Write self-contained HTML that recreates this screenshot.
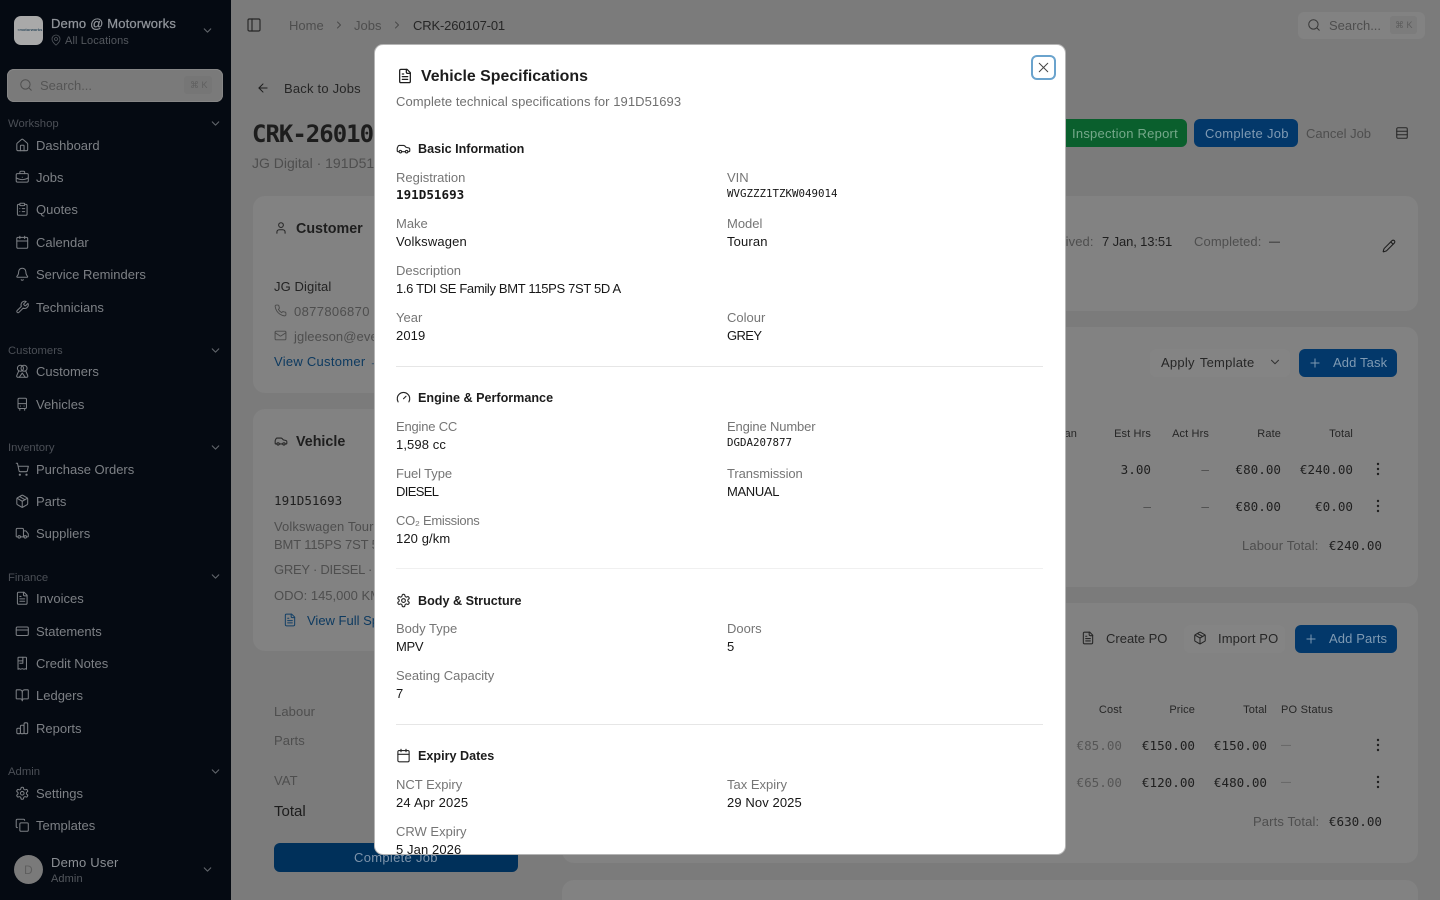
<!DOCTYPE html>
<html lang="en"><head><meta charset="utf-8"><title>Vehicle Specifications</title>
<style>
html,body{margin:0;padding:0;width:1440px;height:900px;overflow:hidden;background:#7b7b7b}
body{position:relative;font-family:"Liberation Sans","DejaVu Sans",sans-serif;font-size:13px;color:#1c1c1c}
.t{position:absolute;line-height:20px;height:20px;white-space:nowrap;margin-top:1px}
.m{font-family:"DejaVu Sans Mono","Liberation Mono",monospace}
.b{position:absolute;box-sizing:border-box}
svg.i{position:absolute;fill:none;stroke:currentColor;stroke-width:2;stroke-linecap:round;stroke-linejoin:round}
#side{position:absolute;left:0;top:0;width:231px;height:900px;background:#050a12;overflow:hidden}
#side .n{position:absolute;left:36px;line-height:20px;color:#7d8085;white-space:nowrap;margin-top:1px}
#side .g{position:absolute;left:8px;line-height:16px;font-size:11.3px;color:#4b4f56;white-space:nowrap;margin-top:1px}
#side svg.i{color:#7d8085;width:14.5px;height:14.5px;left:15px;stroke-width:1.7}
#side svg.c{color:#62666c;width:13px;height:13px;left:209px;stroke-width:2}
.card{position:absolute;background:#828282;border-radius:12px}
.g5{color:#4e4e4e}
.h11{font-size:11px;color:#262626;letter-spacing:.12px}
.btn{position:absolute;border-radius:6px;box-sizing:border-box}
.val{font-size:12.6px;color:#1f1f1f}
#modal{position:absolute;left:375px;top:45px;width:690px;height:809px;background:#fff;border-radius:8px;overflow:hidden;box-shadow:0 0 0 1px #b5b5b5;z-index:5}
#modal .l{position:absolute;line-height:20px;color:#757575;white-space:nowrap;margin-top:1px}
#modal .v{position:absolute;line-height:20px;color:#171717;white-space:nowrap;margin-top:1px;letter-spacing:.1px}
#modal .h{position:absolute;left:43px;line-height:20px;font-size:12.6px;font-weight:bold;color:#1c1c1c;white-space:nowrap;margin-top:1px}
#modal .r{position:absolute;left:21px;width:647px;height:1px;background:#e6e6e6}
#modal svg.i{width:15px;height:15px;left:21px;color:#262626;stroke-width:1.8}
</style></head><body>
<svg width="0" height="0" style="position:absolute">
<defs>
<symbol id="house" viewBox="0 0 24 24"><path d="M15 21v-8a1 1 0 0 0-1-1h-4a1 1 0 0 0-1 1v8"/><path d="M3 10a2 2 0 0 1 .709-1.528l7-5.999a2 2 0 0 1 2.582 0l7 5.999A2 2 0 0 1 21 10v9a2 2 0 0 1-2 2H5a2 2 0 0 1-2-2z"/></symbol>
<symbol id="brief" viewBox="0 0 24 24"><path d="M12 12h.01"/><path d="M16 6V4a2 2 0 0 0-2-2h-4a2 2 0 0 0-2 2v2"/><path d="M22 13a18.15 18.15 0 0 1-20 0"/><rect x="2" y="6" width="20" height="14" rx="2"/></symbol>
<symbol id="clip" viewBox="0 0 24 24"><rect x="8" y="2" width="8" height="4" rx="1"/><path d="M16 4h2a2 2 0 0 1 2 2v14a2 2 0 0 1-2 2H6a2 2 0 0 1-2-2V6a2 2 0 0 1 2-2h2"/><path d="M12 11h4"/><path d="M12 16h4"/><path d="M8 11h.01"/><path d="M8 16h.01"/></symbol>
<symbol id="cal" viewBox="0 0 24 24"><path d="M8 2v4"/><path d="M16 2v4"/><rect x="3" y="4" width="18" height="18" rx="2"/><path d="M3 10h18"/></symbol>
<symbol id="bell" viewBox="0 0 24 24"><path d="M10.268 21a2 2 0 0 0 3.464 0"/><path d="M3.262 15.326A1 1 0 0 0 4 17h16a1 1 0 0 0 .74-1.673C19.41 13.956 18 12.499 18 8A6 6 0 0 0 6 8c0 4.499-1.411 5.956-2.738 7.326"/></symbol>
<symbol id="wrench" viewBox="0 0 24 24"><path d="M14.7 6.3a1 1 0 0 0 0 1.4l1.6 1.6a1 1 0 0 0 1.4 0l3.77-3.77a6 6 0 0 1-7.94 7.94l-6.91 6.91a2.12 2.12 0 0 1-3-3l6.91-6.91a6 6 0 0 1 7.94-7.94l-3.76 3.76z"/></symbol>
<symbol id="people" viewBox="0 0 24 24"><circle cx="9" cy="7" r="5"/><circle cx="15" cy="7" r="5"/><path d="M6 12 3 19a2 2 0 0 0 2 3h14a2 2 0 0 0 2-3l-3-7"/><path d="M12 15l-5 7M12 15l5 7"/></symbol>
<symbol id="bus" viewBox="0 0 24 24"><rect x="5" y="2" width="14" height="17" rx="2"/><path d="M5 11h14"/><path d="M9 15h.01"/><path d="M15 15h.01"/><path d="M8 19v3"/><path d="M16 19v3"/></symbol>
<symbol id="cart" viewBox="0 0 24 24"><circle cx="8" cy="21" r="1"/><circle cx="19" cy="21" r="1"/><path d="M2.05 2.05h2l2.66 12.42a2 2 0 0 0 2 1.58h9.78a2 2 0 0 0 1.95-1.57l1.65-7.43H5.12"/></symbol>
<symbol id="pkg" viewBox="0 0 24 24"><path d="M11 21.73a2 2 0 0 0 2 0l7-4A2 2 0 0 0 21 16V8a2 2 0 0 0-1-1.73l-7-4a2 2 0 0 0-2 0l-7 4A2 2 0 0 0 3 8v8a2 2 0 0 0 1 1.73z"/><path d="M12 22V12"/><polyline points="3.29 7 12 12 20.71 7"/><path d="m7.5 4.27 9 5.15"/></symbol>
<symbol id="truck" viewBox="0 0 24 24"><path d="M14 18V6a2 2 0 0 0-2-2H4a2 2 0 0 0-2 2v11a1 1 0 0 0 1 1h2"/><path d="M15 18H9"/><path d="M19 18h2a1 1 0 0 0 1-1v-3.65a1 1 0 0 0-.22-.624l-3.48-4.35A1 1 0 0 0 17.52 8H14"/><circle cx="17" cy="18" r="2"/><circle cx="7" cy="18" r="2"/></symbol>
<symbol id="file" viewBox="0 0 24 24"><path d="M15 2H6a2 2 0 0 0-2 2v16a2 2 0 0 0 2 2h12a2 2 0 0 0 2-2V7Z"/><path d="M14 2v4a2 2 0 0 0 2 2h4"/><path d="M10 9H8"/><path d="M16 13H8"/><path d="M16 17H8"/></symbol>
<symbol id="card" viewBox="0 0 24 24"><rect x="2" y="5" width="20" height="14" rx="2"/><path d="M2 10h20"/></symbol>
<symbol id="note" viewBox="0 0 24 24"><path d="M6 2h12a1 1 0 0 1 1 1v19l-2-1-2 1-3-1-3 1-2-1-2 1V3a1 1 0 0 1 1-1z"/><path d="M5 8h8"/><path d="M13 2v10H8"/></symbol>
<symbol id="book" viewBox="0 0 24 24"><path d="M12 7v14"/><path d="M3 18a1 1 0 0 1-1-1V4a1 1 0 0 1 1-1h5a4 4 0 0 1 4 4 4 4 0 0 1 4-4h5a1 1 0 0 1 1 1v13a1 1 0 0 1-1 1h-6a3 3 0 0 0-3 3 3 3 0 0 0-3-3z"/></symbol>
<symbol id="bars" viewBox="0 0 24 24"><rect x="3" y="12" width="6" height="9" rx="2"/><rect x="9" y="7" width="6" height="14" rx="2"/><rect x="15" y="3" width="6" height="18" rx="2"/></symbol>
<symbol id="gear" viewBox="0 0 24 24"><path d="M12.22 2h-.44a2 2 0 0 0-2 2v.18a2 2 0 0 1-1 1.73l-.43.25a2 2 0 0 1-2 0l-.15-.08a2 2 0 0 0-2.73.73l-.22.38a2 2 0 0 0 .73 2.73l.15.1a2 2 0 0 1 1 1.72v.51a2 2 0 0 1-1 1.74l-.15.09a2 2 0 0 0-.73 2.73l.22.38a2 2 0 0 0 2.73.73l.15-.08a2 2 0 0 1 2 0l.43.25a2 2 0 0 1 1 1.73V20a2 2 0 0 0 2 2h.44a2 2 0 0 0 2-2v-.18a2 2 0 0 1 1-1.73l.43-.25a2 2 0 0 1 2 0l.15.08a2 2 0 0 0 2.73-.73l.22-.39a2 2 0 0 0-.73-2.73l-.15-.08a2 2 0 0 1-1-1.74v-.5a2 2 0 0 1 1-1.74l.15-.09a2 2 0 0 0 .73-2.73l-.22-.38a2 2 0 0 0-2.73-.73l-.15.08a2 2 0 0 1-2 0l-.43-.25a2 2 0 0 1-1-1.73V4a2 2 0 0 0-2-2z"/><circle cx="12" cy="12" r="3"/></symbol>
<symbol id="copy" viewBox="0 0 24 24"><rect x="8" y="8" width="14" height="14" rx="2"/><path d="M4 16c-1.1 0-2-.9-2-2V4c0-1.1.9-2 2-2h10c1.1 0 2 .9 2 2"/></symbol>
<symbol id="car" viewBox="0 0 24 24"><path d="M19 17h2c.6 0 1-.4 1-1v-3c0-.9-.7-1.7-1.5-1.9C18.7 10.6 16 10 16 10s-1.3-1.4-2.2-2.3c-.5-.4-1.1-.7-1.8-.7H5c-.6 0-1.1.4-1.4.9l-1.4 2.9A3.7 3.7 0 0 0 2 12v4c0 .6.4 1 1 1h2"/><circle cx="7" cy="17" r="2"/><path d="M9 17h6"/><circle cx="17" cy="17" r="2"/></symbol>
<symbol id="gauge" viewBox="0 0 24 24"><path d="m12 14 4-4"/><path d="M3.34 19a10 10 0 1 1 17.32 0"/></symbol>
<symbol id="pin" viewBox="0 0 24 24"><path d="M20 10c0 4.993-5.539 10.193-7.399 11.799a1 1 0 0 1-1.202 0C9.539 20.193 4 14.993 4 10a8 8 0 0 1 16 0"/><circle cx="12" cy="10" r="3"/></symbol>
<symbol id="panel" viewBox="0 0 24 24"><rect x="3" y="3" width="18" height="18" rx="2"/><path d="M9 3v18"/></symbol>
<symbol id="search" viewBox="0 0 24 24"><path d="m21 21-4.34-4.34"/><circle cx="11" cy="11" r="8"/></symbol>
<symbol id="x" viewBox="0 0 24 24"><path d="M18 6 6 18"/><path d="m6 6 12 12"/></symbol>
<symbol id="pencil" viewBox="0 0 24 24"><path d="M21.174 6.812a1 1 0 0 0-3.986-3.987L3.842 16.174a2 2 0 0 0-.5.83l-1.321 4.352a.5.5 0 0 0 .623.622l4.353-1.32a2 2 0 0 0 .83-.497z"/><path d="m15 5 4 4"/></symbol>
<symbol id="user" viewBox="0 0 24 24"><path d="M19 21v-2a4 4 0 0 0-4-4H9a4 4 0 0 0-4 4v2"/><circle cx="12" cy="7" r="4"/></symbol>
<symbol id="phone" viewBox="0 0 24 24"><path d="M22 16.92v3a2 2 0 0 1-2.18 2 19.79 19.79 0 0 1-8.63-3.07 19.5 19.5 0 0 1-6-6 19.79 19.79 0 0 1-3.07-8.67A2 2 0 0 1 4.11 2h3a2 2 0 0 1 2 1.72 12.84 12.84 0 0 0 .7 2.81 2 2 0 0 1-.45 2.11L8.09 9.91a16 16 0 0 0 6 6l1.27-1.27a2 2 0 0 1 2.11-.45 12.84 12.84 0 0 0 2.81.7A2 2 0 0 1 22 16.92z"/></symbol>
<symbol id="mail" viewBox="0 0 24 24"><rect x="2" y="4" width="20" height="16" rx="2"/><path d="m22 7-8.97 5.7a1.94 1.94 0 0 1-2.06 0L2 7"/></symbol>
<symbol id="down" viewBox="0 0 24 24"><path d="m6 9 6 6 6-6"/></symbol>
<symbol id="right" viewBox="0 0 24 24"><path d="m9 18 6-6-6-6"/></symbol>
<symbol id="left" viewBox="0 0 24 24"><path d="m12 19-7-7 7-7"/><path d="M19 12H5"/></symbol>
<symbol id="plus" viewBox="0 0 24 24"><path d="M5 12h14"/><path d="M12 5v14"/></symbol>
<symbol id="table" viewBox="0 0 24 24"><rect x="3" y="3" width="18" height="18" rx="2"/><path d="M3 9h18"/><path d="M3 15h18"/></symbol>
</defs></svg>

<!-- HEADER -->
<svg class="i" style="left:246px;top:17px;width:16px;height:16px;color:#262626;stroke-width:1.7"><use href="#panel"/></svg>
<div class="t g5" style="left:289px;top:15px">Home</div>
<svg class="i" style="left:333px;top:19px;width:12px;height:12px;color:#4a4a4a"><use href="#right"/></svg>
<div class="t g5" style="left:354px;top:15px">Jobs</div>
<svg class="i" style="left:391px;top:19px;width:12px;height:12px;color:#4a4a4a"><use href="#right"/></svg>
<div class="t" style="left:413px;top:15px;color:#262626;letter-spacing:-.15px">CRK-260107-01</div>
<div class="b" style="left:1298px;top:12px;width:127px;height:27px;border-radius:6px;background:#828282"></div>
<svg class="i" style="left:1307px;top:18px;width:14px;height:14px;color:#363636;stroke-width:1.7"><use href="#search"/></svg>
<div class="t g5" style="left:1329px;top:15px">Search...</div>
<div class="b" style="left:1390px;top:16px;width:27px;height:18px;border-radius:3px;background:#7c7c7c"></div>
<div class="t" style="left:1395px;top:14px;font-size:9px;color:#5c5c5c">⌘ K</div>

<!-- LEFT COLUMN -->
<svg class="i" style="left:256px;top:81px;width:14px;height:14px;color:#1c1c1c;stroke-width:1.7"><use href="#left"/></svg>
<div class="t" style="left:284px;top:78px;color:#262626;letter-spacing:.2px">Back to Jobs</div>
<div class="t m" style="left:252px;top:123px;font-size:24px;font-weight:bold;letter-spacing:-1px;color:#1d1d1d">CRK-260107-01</div>
<div class="t g5" style="left:252px;top:152px;font-size:14px">JG Digital · 191D51693</div>

<div class="card" style="left:253px;top:196px;width:290px;height:197px"></div>
<svg class="i" style="left:274px;top:221px;width:14px;height:14px;color:#262626;stroke-width:1.8"><use href="#user"/></svg>
<div class="t" style="left:296px;top:218px;font-size:14.3px;font-weight:bold;color:#1e1e1e">Customer</div>
<div class="t" style="left:274px;top:276px;color:#232323;letter-spacing:.1px">JG Digital</div>
<svg class="i" style="left:274px;top:304px;width:13px;height:13px;color:#4a4a4a;stroke-width:1.7"><use href="#phone"/></svg>
<div class="t g5" style="left:294px;top:301px;letter-spacing:.35px">0877806870</div>
<svg class="i" style="left:274px;top:329px;width:13px;height:13px;color:#4a4a4a;stroke-width:1.7"><use href="#mail"/></svg>
<div class="t g5" style="left:294px;top:326px;letter-spacing:.1px">jgleeson@everydigital.ie</div>
<div class="t" style="left:274px;top:351px;color:#0d3a60;letter-spacing:.27px">View Customer →</div>

<div class="card" style="left:253px;top:409px;width:290px;height:242px"></div>
<svg class="i" style="left:274px;top:434px;width:14px;height:14px;color:#262626;stroke-width:1.8"><use href="#car"/></svg>
<div class="t" style="left:296px;top:431px;font-size:14.3px;font-weight:bold;color:#1e1e1e">Vehicle</div>
<div class="t m" style="left:274px;top:490px;font-size:12.6px;color:#1f1f1f">191D51693</div>
<div class="t g5" style="left:274px;top:516px;letter-spacing:.1px">Volkswagen Touran 1.6 TDI SE Family</div>
<div class="t g5" style="left:274px;top:534px;letter-spacing:-.15px">BMT 115PS 7ST 5D A</div>
<div class="t g5" style="left:274px;top:559px;letter-spacing:-.25px">GREY · DIESEL · MANUAL</div>
<div class="t g5" style="left:274px;top:585px">ODO: 145,000 KM</div>
<svg class="i" style="left:283px;top:613px;width:14px;height:14px;color:#123f66;stroke-width:1.7"><use href="#file"/></svg>
<div class="t" style="left:307px;top:610px;color:#0d3a60">View Full Specifications</div>

<div class="t g5" style="left:274px;top:701px;letter-spacing:.1px">Labour</div>
<div class="t g5" style="left:274px;top:730px;letter-spacing:.1px">Parts</div>
<div class="t g5" style="left:274px;top:770px;letter-spacing:.1px">VAT</div>
<div class="t" style="left:274px;top:801px;font-size:15px;color:#1c1c1c">Total</div>
<div class="b" style="left:274px;top:843px;width:244px;height:29px;border-radius:6px;background:#00305a"></div>
<div class="t" style="left:354px;top:847px;color:#7d93aa;letter-spacing:.3px">Complete Job</div>

<!-- RIGHT COLUMN -->
<div class="btn" style="left:1040px;top:119px;width:147px;height:28px;background:#0a5f2d"></div>
<div class="t" style="left:1072px;top:123px;color:#75a88a;letter-spacing:.24px">Inspection Report</div>
<div class="btn" style="left:1194px;top:119px;width:104px;height:28px;background:#03386a"></div>
<div class="t" style="left:1205px;top:123px;color:#7f9ab3;letter-spacing:.3px">Complete Job</div>
<div class="t g5" style="left:1306px;top:123px">Cancel Job</div>
<svg class="i" style="left:1395px;top:126px;width:14px;height:14px;color:#262626;stroke-width:1.8"><use href="#table"/></svg>

<div class="card" style="left:562px;top:196px;width:856px;height:115px"></div>
<div class="t g5" style="left:1048px;top:231px;letter-spacing:.1px">Arrived:</div>
<div class="t" style="left:1102px;top:231px;color:#1f1f1f;letter-spacing:-.12px">7 Jan, 13:51</div>
<div class="t g5" style="left:1194px;top:231px;letter-spacing:.1px">Completed:</div>
<div class="t" style="left:1269px;top:231px;color:#1f1f1f;font-size:11px">—</div>
<svg class="i" style="left:1382px;top:239px;width:14px;height:14px;color:#1c1c1c;stroke-width:1.8"><use href="#pencil"/></svg>

<div class="card" style="left:562px;top:327px;width:856px;height:260px"></div>
<div class="b" style="left:1150px;top:349px;width:140px;height:28px;border-radius:6px;background:#848484"></div>
<div class="t" style="left:1161px;top:352px;color:#262626;letter-spacing:.24px;word-spacing:1.5px">Apply Template</div>
<svg class="i" style="left:1268px;top:355px;width:14px;height:14px;color:#303030;stroke-width:1.8"><use href="#down"/></svg>
<div class="btn" style="left:1299px;top:349px;width:98px;height:28px;background:#03386a"></div>
<svg class="i" style="left:1308px;top:356px;width:14px;height:14px;color:#7f9ab3;stroke-width:1.7"><use href="#plus"/></svg>
<div class="t" style="left:1333px;top:352px;color:#7f9ab3;letter-spacing:.12px">Add Task</div>

<div class="t h11" style="left:1065px;top:423px;width:12px;overflow:hidden;direction:rtl">an</div>
<div class="t h11" style="right:289px;top:423px">Est Hrs</div>
<div class="t h11" style="right:231px;top:423px">Act Hrs</div>
<div class="t h11" style="right:159px;top:423px">Rate</div>
<div class="t h11" style="right:87px;top:423px">Total</div>
<div class="t m val" style="right:289px;top:459px">3.00</div>
<div class="t m val" style="right:231px;top:459px;color:#4a4a4a">—</div>
<div class="t m val" style="right:159px;top:459px">€80.00</div>
<div class="t m val" style="right:87px;top:459px">€240.00</div>
<div class="t m val" style="right:289px;top:496px;color:#4a4a4a">—</div>
<div class="t m val" style="right:231px;top:496px;color:#4a4a4a">—</div>
<div class="t m val" style="right:159px;top:496px">€80.00</div>
<div class="t m val" style="right:87px;top:496px">€0.00</div>
<svg style="position:absolute;left:1376px;top:462px" width="4" height="52" fill="#1f1f1f"><circle cx="2" cy="2" r="1.2"/><circle cx="2" cy="7" r="1.2"/><circle cx="2" cy="12" r="1.2"/><circle cx="2" cy="39" r="1.2"/><circle cx="2" cy="44" r="1.2"/><circle cx="2" cy="49" r="1.2"/></svg>
<div class="t g5" style="left:1242px;top:535px;letter-spacing:.12px">Labour Total:</div>
<div class="t m val" style="right:58px;top:535px">€240.00</div>

<div class="card" style="left:562px;top:603px;width:856px;height:260px"></div>
<svg class="i" style="left:1081px;top:631px;width:14px;height:14px;color:#262626;stroke-width:1.8"><use href="#file"/></svg>
<div class="t" style="left:1106px;top:628px;color:#262626">Create PO</div>
<div class="b" style="left:1184px;top:625px;width:101px;height:28px;border-radius:6px;background:#848484"></div>
<svg class="i" style="left:1193px;top:631px;width:14px;height:14px;color:#262626;stroke-width:1.8"><use href="#pkg"/></svg>
<div class="t" style="left:1218px;top:628px;color:#262626;letter-spacing:.12px">Import PO</div>
<div class="btn" style="left:1295px;top:625px;width:102px;height:28px;background:#03386a"></div>
<svg class="i" style="left:1304px;top:632px;width:14px;height:14px;color:#7f9ab3;stroke-width:1.7"><use href="#plus"/></svg>
<div class="t" style="left:1329px;top:628px;color:#7f9ab3;letter-spacing:.12px">Add Parts</div>

<div class="t h11" style="right:318px;top:699px">Cost</div>
<div class="t h11" style="right:245px;top:699px">Price</div>
<div class="t h11" style="right:173px;top:699px">Total</div>
<div class="t h11" style="left:1281px;top:699px;letter-spacing:.22px">PO Status</div>
<div class="t m val" style="right:318px;top:735px;color:#565656">€85.00</div>
<div class="t m val" style="right:245px;top:735px">€150.00</div>
<div class="t m val" style="right:173px;top:735px">€150.00</div>
<div class="t" style="left:1281px;top:735px;color:#5c5c5c;font-size:10px">—</div>
<div class="t m val" style="right:318px;top:772px;color:#565656">€65.00</div>
<div class="t m val" style="right:245px;top:772px">€120.00</div>
<div class="t m val" style="right:173px;top:772px">€480.00</div>
<div class="t" style="left:1281px;top:772px;color:#5c5c5c;font-size:10px">—</div>
<svg style="position:absolute;left:1376px;top:738px" width="4" height="52" fill="#1f1f1f"><circle cx="2" cy="2" r="1.2"/><circle cx="2" cy="7" r="1.2"/><circle cx="2" cy="12" r="1.2"/><circle cx="2" cy="39" r="1.2"/><circle cx="2" cy="44" r="1.2"/><circle cx="2" cy="49" r="1.2"/></svg>
<div class="t g5" style="left:1253px;top:811px;letter-spacing:.12px">Parts Total:</div>
<div class="t m val" style="right:58px;top:811px">€630.00</div>

<div class="card" style="left:562px;top:880px;width:856px;height:60px"></div>

<!-- SIDEBAR -->
<div id="side">
  <div class="b" style="left:14px;top:16px;width:29px;height:29px;border-radius:7px;background:#a9a9a9"></div>
  <div class="t" style="left:17px;top:19px;font-size:4px;font-weight:bold;color:#2f4a5c;letter-spacing:0">◖motorworks</div>
  <div class="t" style="left:51px;top:13px;color:#90949a;-webkit-text-stroke:.25px #90949a;letter-spacing:.16px">Demo @ Motorworks</div>
  <svg class="i" style="left:50px;top:34px;width:12px;height:12px;color:#4e5359;stroke-width:1.7"><use href="#pin"/></svg>
  <div class="t" style="left:65px;top:30px;font-size:11px;color:#54585e;letter-spacing:.12px">All Locations</div>
  <svg class="i c" style="left:201px;top:24px"><use href="#down"/></svg>

  <div class="b" style="left:7px;top:69px;width:216px;height:33px;border-radius:7px;background:#7a7a7a;box-shadow:inset 0 0 0 1px #868686"></div>
  <svg class="i" style="left:19px;top:78px;width:14px;height:14px;color:#4e4e4e"><use href="#search"/></svg>
  <div class="t" style="left:40px;top:75px;color:#555">Search...</div>
  <div class="b" style="left:184px;top:76px;width:28px;height:18px;border-radius:3px;background:#767676"></div>
  <div class="t" style="left:190px;top:74px;font-size:9px;color:#5f5f5f">⌘ K</div>

  <div class="g" style="top:115px">Workshop</div><svg class="i c" style="top:117px"><use href="#down"/></svg>
  <svg class="i" style="top:138px"><use href="#house"/></svg><div class="n" style="top:135px">Dashboard</div>
  <svg class="i" style="top:170px"><use href="#brief"/></svg><div class="n" style="top:167px">Jobs</div>
  <svg class="i" style="top:202px"><use href="#clip"/></svg><div class="n" style="top:199px">Quotes</div>
  <svg class="i" style="top:235px"><use href="#cal"/></svg><div class="n" style="top:232px">Calendar</div>
  <svg class="i" style="top:267px"><use href="#bell"/></svg><div class="n" style="top:264px">Service Reminders</div>
  <svg class="i" style="top:300px"><use href="#wrench"/></svg><div class="n" style="top:297px">Technicians</div>

  <div class="g" style="top:342px">Customers</div><svg class="i c" style="top:344px"><use href="#down"/></svg>
  <svg class="i" style="top:364px"><use href="#people"/></svg><div class="n" style="top:361px">Customers</div>
  <svg class="i" style="top:397px"><use href="#bus"/></svg><div class="n" style="top:394px">Vehicles</div>

  <div class="g" style="top:439px">Inventory</div><svg class="i c" style="top:441px"><use href="#down"/></svg>
  <svg class="i" style="top:462px"><use href="#cart"/></svg><div class="n" style="top:459px">Purchase Orders</div>
  <svg class="i" style="top:494px"><use href="#pkg"/></svg><div class="n" style="top:491px">Parts</div>
  <svg class="i" style="top:526px"><use href="#truck"/></svg><div class="n" style="top:523px">Suppliers</div>

  <div class="g" style="top:569px">Finance</div><svg class="i c" style="top:570px"><use href="#down"/></svg>
  <svg class="i" style="top:591px"><use href="#file"/></svg><div class="n" style="top:588px">Invoices</div>
  <svg class="i" style="top:624px"><use href="#card"/></svg><div class="n" style="top:621px">Statements</div>
  <svg class="i" style="top:656px"><use href="#note"/></svg><div class="n" style="top:653px">Credit Notes</div>
  <svg class="i" style="top:688px"><use href="#book"/></svg><div class="n" style="top:685px">Ledgers</div>
  <svg class="i" style="top:721px"><use href="#bars"/></svg><div class="n" style="top:718px">Reports</div>

  <div class="g" style="top:763px">Admin</div><svg class="i c" style="top:765px"><use href="#down"/></svg>
  <svg class="i" style="top:786px"><use href="#gear"/></svg><div class="n" style="top:783px">Settings</div>
  <svg class="i" style="top:818px"><use href="#copy"/></svg><div class="n" style="top:815px">Templates</div>

  <div class="b" style="left:14px;top:855px;width:29px;height:29px;border-radius:50%;background:#7a7a7a"></div>
  <div class="t" style="left:24px;top:859px;font-size:12px;color:#5e5e5e">D</div>
  <div class="t" style="left:51px;top:852px;color:#8b8f94;letter-spacing:.2px">Demo User</div>
  <div class="t" style="left:51px;top:868px;font-size:11px;color:#54585e;letter-spacing:.1px">Admin</div>
  <svg class="i c" style="left:201px;top:863px"><use href="#down"/></svg>
</div>

<!-- MODAL -->
<div id="modal">
  <svg class="i" style="left:22px;top:23px;width:16px;height:16px;color:#1c1c1c;stroke-width:1.9"><use href="#file"/></svg>
  <div class="t" style="left:46px;top:21px;font-size:15.9px;font-weight:bold;color:#1c1c1c">Vehicle Specifications</div>
  <div class="t" style="left:21px;top:46px;color:#707070;letter-spacing:.07px">Complete technical specifications for 191D51693</div>

  <div class="b" style="left:658px;top:12px;width:21px;height:21px;border-radius:4px;box-shadow:0 0 0 2px #6aa3cd"></div>
  <svg class="i" style="left:660px;top:14px;width:17px;height:17px;color:#444;stroke-width:1.4"><use href="#x"/></svg>

  <svg class="i" style="top:96px"><use href="#car"/></svg><div class="h" style="top:93px">Basic Information</div>
  <div class="l" style="left:21px;top:122px">Registration</div>
  <div class="v m" style="left:21px;top:139px;font-size:12.6px;font-weight:bold;letter-spacing:0">191D51693</div>
  <div class="l" style="left:352px;top:122px">VIN</div>
  <div class="v m" style="left:352px;top:138px;font-size:10.8px;letter-spacing:0">WVGZZZ1TZKW049014</div>
  <div class="l" style="left:21px;top:168px">Make</div><div class="v" style="left:21px;top:186px;letter-spacing:.15px">Volkswagen</div>
  <div class="l" style="left:352px;top:168px">Model</div><div class="v" style="left:352px;top:186px;letter-spacing:.15px">Touran</div>
  <div class="l" style="left:21px;top:215px">Description</div><div class="v" style="left:21px;top:233px;letter-spacing:-.33px">1.6 TDI SE Family BMT 115PS 7ST 5D A</div>
  <div class="l" style="left:21px;top:262px">Year</div><div class="v" style="left:21px;top:280px">2019</div>
  <div class="l" style="left:352px;top:262px">Colour</div><div class="v" style="left:352px;top:280px;letter-spacing:-.6px">GREY</div>
  <div class="r" style="top:321px"></div>

  <svg class="i" style="top:345px"><use href="#gauge"/></svg><div class="h" style="top:342px">Engine &amp; Performance</div>
  <div class="l" style="left:21px;top:371px;letter-spacing:-.2px">Engine CC</div><div class="v" style="left:21px;top:389px">1,598 cc</div>
  <div class="l" style="left:352px;top:371px;letter-spacing:-.15px">Engine Number</div><div class="v m" style="left:352px;top:387px;font-size:10.8px;letter-spacing:0">DGDA207877</div>
  <div class="l" style="left:21px;top:418px;letter-spacing:-.1px">Fuel Type</div><div class="v" style="left:21px;top:436px;letter-spacing:-.65px">DIESEL</div>
  <div class="l" style="left:352px;top:418px;letter-spacing:-.1px">Transmission</div><div class="v" style="left:352px;top:436px;letter-spacing:-.35px">MANUAL</div>
  <div class="l" style="left:21px;top:465px;letter-spacing:-.3px">CO₂ Emissions</div><div class="v" style="left:21px;top:483px">120 g/km</div>
  <div class="r" style="top:523px;background:#f0f0f0"></div>

  <svg class="i" style="top:548px"><use href="#gear"/></svg><div class="h" style="top:545px">Body &amp; Structure</div>
  <div class="l" style="left:21px;top:573px">Body Type</div><div class="v" style="left:21px;top:591px;letter-spacing:-.3px">MPV</div>
  <div class="l" style="left:352px;top:573px">Doors</div><div class="v" style="left:352px;top:591px">5</div>
  <div class="l" style="left:21px;top:620px">Seating Capacity</div><div class="v" style="left:21px;top:638px">7</div>
  <div class="r" style="top:679px"></div>

  <svg class="i" style="top:703px"><use href="#cal"/></svg><div class="h" style="top:700px">Expiry Dates</div>
  <div class="l" style="left:21px;top:729px">NCT Expiry</div><div class="v" style="left:21px;top:747px;letter-spacing:.2px">24 Apr 2025</div>
  <div class="l" style="left:352px;top:729px">Tax Expiry</div><div class="v" style="left:352px;top:747px;letter-spacing:.1px">29 Nov 2025</div>
  <div class="l" style="left:21px;top:776px">CRW Expiry</div><div class="v" style="left:21px;top:794px;letter-spacing:.1px">5 Jan 2026</div>
</div>
</body></html>
